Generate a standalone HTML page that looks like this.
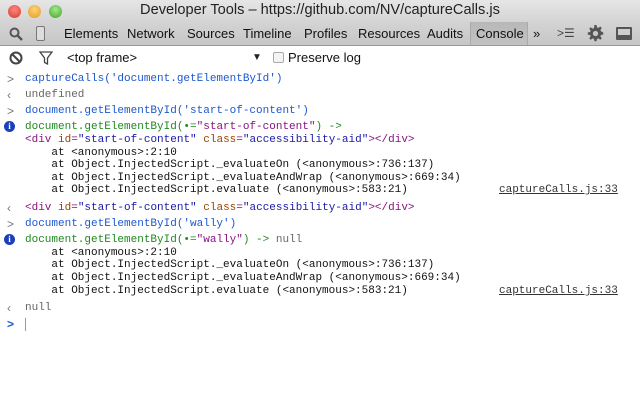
<!DOCTYPE html>
<html><head><meta charset="utf-8"><style>
*{margin:0;padding:0;box-sizing:border-box}
body{width:640px;height:400px;overflow:hidden;background:#fff;font-family:"Liberation Sans",sans-serif;position:relative}
#title{position:absolute;left:0;top:0;width:640px;height:22px;background:linear-gradient(#e6e6e6,#d4d4d4);}
#title .t{position:absolute;left:0;width:640px;top:2px;text-align:center;font-size:14.6px;color:#222}
.tl{position:absolute;top:5px;width:13px;height:13px;border-radius:50%}
#tabs{position:absolute;left:0;top:22px;width:640px;height:24px;background:linear-gradient(#d4d4d4,#c6c6c6);border-bottom:1px solid #9a9a9a}
#tabs span{position:absolute;top:4px;font-size:13px;color:#111}
#sel{position:absolute;left:470px;top:0;width:58px;height:23px;background:linear-gradient(#b8b8b8,#c2c2c2);border-left:1px solid #aaa;border-right:1px solid #aaa}
#bar{position:absolute;left:0;top:46px;width:640px;height:23px;background:#fff}
.m{position:absolute;font-family:"Liberation Mono",monospace;font-size:11px;line-height:13px;white-space:pre;color:#111}
.b{color:#1c58d0}.g{color:#1f8a1f}.gr{color:#666}.tag{color:#881280}.an{color:#994500}.av{color:#1a1aa6}
.p{position:absolute;left:7px;font-size:12px;line-height:13px;font-family:"Liberation Sans",sans-serif;color:#777}
.lk{position:absolute;left:499px;font-family:"Liberation Mono",monospace;font-size:11px;line-height:13px;text-decoration:underline;color:#333}
</style></head><body>
<div id="title">
<div class="tl" style="left:8px;background:radial-gradient(circle at 50% 35%,#ff8a80,#d8342a)"></div>
<div class="tl" style="left:28px;background:radial-gradient(circle at 50% 35%,#ffd27a,#e29a1c)"></div>
<div class="tl" style="left:49px;background:radial-gradient(circle at 50% 35%,#a6e88a,#3fa52c)"></div>
<div class="t">Developer Tools – https://github.com/NV/captureCalls.js</div>
</div>
<div id="tabs">
<div id="sel"></div>
<svg style="position:absolute;left:9px;top:5px" width="14" height="14"><circle cx="5.5" cy="5.5" r="4" fill="none" stroke="#555" stroke-width="2"/><line x1="8.5" y1="8.5" x2="13" y2="13" stroke="#555" stroke-width="2.4"/></svg>
<div style="position:absolute;left:36px;top:4px;width:9px;height:15px;border:1px solid #777;border-radius:2px;background:#ddd"></div>
<span style="left:64px">Elements</span>
<span style="left:127px">Network</span>
<span style="left:187px">Sources</span>
<span style="left:243px">Timeline</span>
<span style="left:304px">Profiles</span>
<span style="left:358px">Resources</span>
<span style="left:427px">Audits</span>
<span style="left:476px">Console</span>
<span style="left:533px">»</span>
<span style="left:557px;font-size:12px;color:#444">&gt;☰</span>
<svg style="position:absolute;left:587px;top:3px" width="17" height="17" viewBox="0 0 16 16"><path fill="#555" d="M7 0h2l.4 2.2 1.3.5 1.8-1.3 1.4 1.4-1.3 1.8.5 1.3L15.3 7v2l-2.2.4-.5 1.3 1.3 1.8-1.4 1.4-1.8-1.3-1.3.5L9 15.3H7l-.4-2.2-1.3-.5-1.8 1.3-1.4-1.4 1.3-1.8-.5-1.3L.7 9V7l2.2-.4.5-1.3L2.1 3.5l1.4-1.4 1.8 1.3 1.3-.5z"/><circle cx="8" cy="8" r="2.5" fill="#c9c9c9"/></svg>
<div style="position:absolute;left:616px;top:5px;width:16px;height:13px;border:2px solid #555;border-bottom-width:5px;border-radius:1px"></div>
</div>
<div id="bar">
<svg style="position:absolute;left:9px;top:5px" width="14" height="14"><circle cx="7" cy="7" r="5.5" fill="none" stroke="#444" stroke-width="2"/><line x1="3" y1="3" x2="11" y2="11" stroke="#444" stroke-width="2"/></svg>
<svg style="position:absolute;left:39px;top:5px" width="14" height="14"><path d="M1 1h12L8.5 7v6l-3-1.5V7z" fill="#fff" stroke="#444" stroke-width="1.3"/></svg>
<div style="position:absolute;left:67px;top:4px;font-size:13px;color:#111">&lt;top frame&gt;</div>
<div style="position:absolute;left:252px;top:6px;font-size:10px;color:#222">▼</div>
<div style="position:absolute;left:273px;top:6px;width:11px;height:11px;border:1px solid #aaa;border-radius:2px;background:#f4f4f4"></div>
<div style="position:absolute;left:288px;top:4px;font-size:13px;color:#111">Preserve log</div>
</div>

<div class="p" style="top:73px">&gt;</div><div class="m b" style="left:25px;top:73px">captureCalls('document.getElementById')</div>
<div class="p" style="top:89px">‹</div><div class="m gr" style="left:25px;top:89px">undefined</div>
<div class="p" style="top:105px">&gt;</div><div class="m b" style="left:25px;top:105px">document.getElementById('start-of-content')</div>
<div style="position:absolute;left:4px;top:121px;width:11px;height:11px;border-radius:50%;background:#1c3fb8;color:#fff;font:bold 9px/11px 'Liberation Serif',serif;text-align:center">i</div>
<div class="m g" style="left:25px;top:121px">document.getElementById(•=<span class="tag">"start-of-content"</span>) -&gt;</div>
<div class="m" style="left:25px;top:134px"><span class="tag">&lt;div</span> <span class="an">id</span><span class="tag">=</span><span class="av">"start-of-content"</span> <span class="an">class</span><span class="tag">=</span><span class="av">"accessibility-aid"</span><span class="tag">&gt;&lt;/div&gt;</span></div>
<div class="m" style="left:25px;top:147px">    at &lt;anonymous&gt;:2:10</div>
<div class="m" style="left:25px;top:159px">    at Object.InjectedScript._evaluateOn (&lt;anonymous&gt;:736:137)</div>
<div class="m" style="left:25px;top:172px">    at Object.InjectedScript._evaluateAndWrap (&lt;anonymous&gt;:669:34)</div>
<div class="m" style="left:25px;top:184px">    at Object.InjectedScript.evaluate (&lt;anonymous&gt;:583:21)</div>
<div class="lk" style="top:184px">captureCalls.js:33</div>
<div class="p" style="top:202px">‹</div><div class="m" style="left:25px;top:202px"><span class="tag">&lt;div</span> <span class="an">id</span><span class="tag">=</span><span class="av">"start-of-content"</span> <span class="an">class</span><span class="tag">=</span><span class="av">"accessibility-aid"</span><span class="tag">&gt;&lt;/div&gt;</span></div>
<div class="p" style="top:218px">&gt;</div><div class="m b" style="left:25px;top:218px">document.getElementById('wally')</div>
<div style="position:absolute;left:4px;top:234px;width:11px;height:11px;border-radius:50%;background:#1c3fb8;color:#fff;font:bold 9px/11px 'Liberation Serif',serif;text-align:center">i</div>
<div class="m g" style="left:25px;top:234px">document.getElementById(•=<span class="tag">"wally"</span>) -&gt; <span class="gr">null</span></div>
<div class="m" style="left:25px;top:247px">    at &lt;anonymous&gt;:2:10</div>
<div class="m" style="left:25px;top:259px">    at Object.InjectedScript._evaluateOn (&lt;anonymous&gt;:736:137)</div>
<div class="m" style="left:25px;top:272px">    at Object.InjectedScript._evaluateAndWrap (&lt;anonymous&gt;:669:34)</div>
<div class="m" style="left:25px;top:285px">    at Object.InjectedScript.evaluate (&lt;anonymous&gt;:583:21)</div>
<div class="lk" style="top:285px">captureCalls.js:33</div>
<div class="p" style="top:302px">‹</div><div class="m gr" style="left:25px;top:302px">null</div>
<div class="p" style="top:318px;color:#1c58d0;font-weight:bold">&gt;</div>
<div style="position:absolute;left:25px;top:318px;width:1px;height:13px;background:#999"></div>
</body></html>
